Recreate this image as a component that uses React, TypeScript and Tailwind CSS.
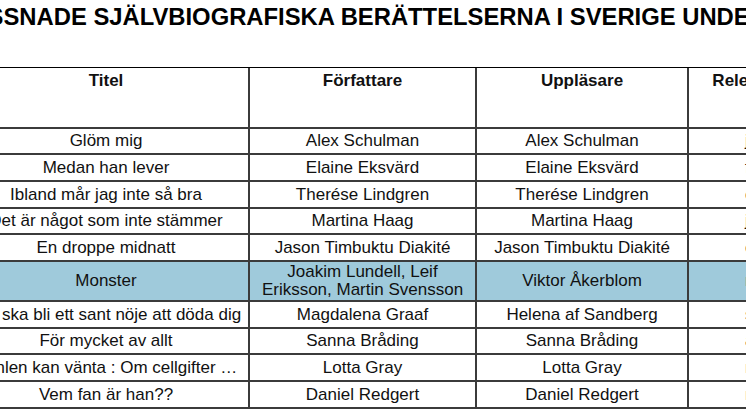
import React from "react"

type Row = {
  titel: string
  forfattare: string[]
  upplasare: string
  datum: string
  h: string
  highlight?: boolean
}

const rows: Row[] = [
  { titel: "Glöm mig", forfattare: ["Alex Schulman"], upplasare: "Alex Schulman", datum: "jan 2018", h: "h-[26px]" },
  { titel: "Medan han lever", forfattare: ["Elaine Eksvärd"], upplasare: "Elaine Eksvärd", datum: "feb 2018", h: "h-[27px]" },
  { titel: "Ibland mår jag inte så bra", forfattare: ["Therése Lindgren"], upplasare: "Therése Lindgren", datum: "okt 2017", h: "h-[27px]" },
  { titel: "Det är något som inte stämmer", forfattare: ["Martina Haag"], upplasare: "Martina Haag", datum: "jan 2018", h: "h-[26px]" },
  { titel: "En droppe midnatt", forfattare: ["Jason Timbuktu Diakité"], upplasare: "Jason Timbuktu Diakité", datum: "okt 2016", h: "h-[27px]" },
  {
    titel: "Monster",
    forfattare: ["Joakim Lundell, Leif", "Eriksson, Martin Svensson"],
    upplasare: "Viktor Åkerblom",
    datum: "nov 2017",
    h: "h-[40px]",
    highlight: true,
  },
  { titel: "Det ska bli ett sant nöje att döda dig", forfattare: ["Magdalena Graaf"], upplasare: "Helena af Sandberg", datum: "sep 2018", h: "h-[27px]" },
  { titel: "För mycket av allt", forfattare: ["Sanna Bråding"], upplasare: "Sanna Bråding", datum: "apr 2018", h: "h-[26px]" },
  { titel: "Himlen kan vänta : Om cellgifter …", forfattare: ["Lotta Gray"], upplasare: "Lotta Gray", datum: "mar 2018", h: "h-[27px]" },
  { titel: "Vem fan är han??", forfattare: ["Daniel Redgert"], upplasare: "Daniel Redgert", datum: "maj 2018", h: "h-[27px]" },
]

const cols = "grid grid-cols-[286px_227px_212px_164px]"
const cell = "flex items-center justify-center border-r-2 border-[#3b3b3b] whitespace-nowrap"

export default function App() {
  return (
    <div className="w-[746px] h-[419px] overflow-hidden bg-white text-[#111] font-['Liberation_Sans',Arial,sans-serif]">
      <div className="flex pt-[5px] h-[67px]">
        <h1 className="ml-[-153px] whitespace-nowrap text-[23.8px] leading-[24px] font-bold text-black">
          DE MEST LYSSNADE SJÄLVBIOGRAFISKA BERÄTTELSERNA I SVERIGE UNDER 2018
        </h1>
      </div>

      <div className="ml-[-36px] w-[889px] border-t border-black text-[17px] leading-[18px]">
        <div className={`${cols} h-[61px] border-b-2 border-[#3b3b3b] font-bold`}>
          <div className="border-r-2 border-[#3b3b3b] text-center pt-[4px]">Titel</div>
          <div className="border-r-2 border-[#3b3b3b] text-center pt-[4px]">Författare</div>
          <div className="border-r-2 border-[#3b3b3b] text-center pt-[4px]">Uppläsare</div>
          <div className="border-r-2 border-[#3b3b3b] text-center pt-[4px]">Releasedatum</div>
        </div>

        {rows.map((r) => (
          <div
            key={r.titel}
            className={`${cols} ${r.h} border-b-2 border-[#3b3b3b] ${r.highlight ? "bg-[#9fcadb]" : ""}`}
          >
            <div className={cell}>{r.titel}</div>
            <div className={`${cell} flex-col`}>
              {r.forfattare.map((line) => (
                <span key={line}>{line}</span>
              ))}
            </div>
            <div className={cell}>{r.upplasare}</div>
            <div className="flex items-center border-r-2 border-[#3b3b3b] whitespace-nowrap pl-[56px]">
              {r.datum}
            </div>
          </div>
        ))}
      </div>
    </div>
  )
}
